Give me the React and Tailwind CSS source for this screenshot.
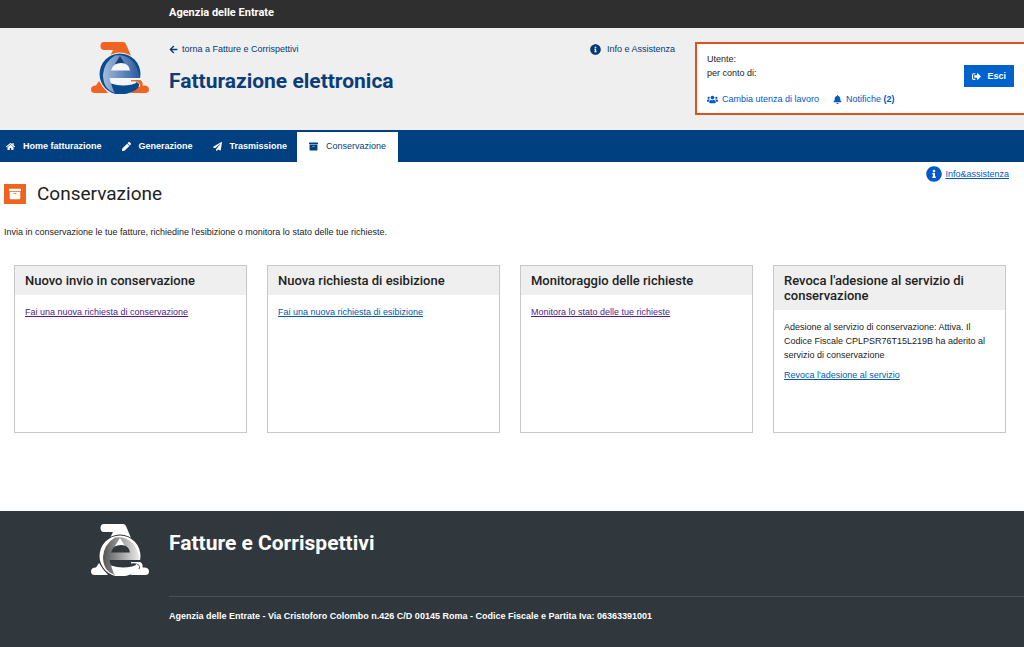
import React from 'react';
import {
  FaArchive,
  FaArrowLeft,
  FaBell,
  FaHome,
  FaInfoCircle,
  FaPaperPlane,
  FaPen,
  FaSignOutAlt,
  FaUsers,
} from 'react-icons/fa';

const NAV_ITEMS = [
  { label: 'Home fatturazione', icon: FaHome },
  { label: 'Generazione', icon: FaPen },
  { label: 'Trasmissione', icon: FaPaperPlane },
  { label: 'Conservazione', icon: FaArchive, active: true },
];

const CARDS = [
  {
    title: 'Nuovo invio in conservazione',
    link: 'Fai una nuova richiesta di conservazione',
    visited: true,
  },
  {
    title: 'Nuova richiesta di esibizione',
    link: 'Fai una nuova richiesta di esibizione',
  },
  {
    title: 'Monitoraggio delle richieste',
    link: 'Monitora lo stato delle tue richieste',
    visited: true,
  },
  {
    title: "Revoca l'adesione al servizio di conservazione",
    text: 'Adesione al servizio di conservazione: Attiva. Il Codice Fiscale CPLPSR76T15L219B ha aderito al servizio di conservazione',
    link: "Revoca l'adesione al servizio",
  },
];

const Logo = ({ id, base, ring, from, to, hole, swoosh, peak }) => (
  <svg viewBox="0 0 58 52" className="h-[52px] w-[58px] shrink-0" role="img" aria-label="Agenzia delle Entrate">
    <defs>
      <linearGradient id={id} x1="0" y1="0" x2="1" y2="0">
        <stop offset="0" stopColor={from} />
        <stop offset="1" stopColor={to} />
      </linearGradient>
    </defs>
    {/* Cap and feet */}
    <path d="M13 0H32Q34 0 35 2L40 14H19L22 8H13Q9.500 8 9.500 4T13 0Z" fill={base} />
    <path d="M8 39 5 43.500H4Q0 44 0 47.500T4 51H17Z" fill={base} />
    <path d="M42 38H49Q52 39 51 43.500H54Q58 44 58 47.500T54 51H40Z" fill={base} />
    {/* Round letter */}
    <circle cx="29" cy="32" r="21.500" fill={hole} />
    <circle cx="29" cy="32" r="20.500" fill={ring} />
    <path d="M24 13.500Q44 11 49 36H19Q19 41 24 45V51Q12 47 12 33 13 20 24 13.500Z" fill={`url(#${id})`} />
    <path d="M29 14 34 22H24Z" fill={peak} />
    <path d="M20 28.500Q22 21 30 21T39 28.500Z" fill={hole} />
    <path d="M18.500 36H51V44L44 46H24Q19 42 18.500 36Z" fill={hole} />
    {/* Closing stroke and right arm */}
    <path d="M20 41.500Q30 45 41 42.500 46 41 45 40 50 41 47 46 42 51.500 31 52 26 52 23 50Z" fill={swoosh} />
    <path d="M40 38H49Q52 39 51.500 43.500L53 51H47Q51 43 47 40 44 39 40 39.500Z" fill={base} />
  </svg>
);

const NavItem = ({ label, icon: Icon, active }) => (
  <a
    href="#"
    aria-current={active ? 'page' : undefined}
    className={
      active
        ? 'mt-0.5 flex items-center gap-2 bg-white px-3 pb-0.5 text-[#004080]'
        : 'flex items-center gap-2 px-2.5 font-bold text-white first:pl-1.5'
    }
  >
    <Icon className="size-[9px]" />
    {label}
  </a>
);

const Card = ({ title, text, link, visited }) => (
  <section className="min-h-[168px] border border-[#c8c8c8] bg-white">
    <h2 className="bg-[#efefef] px-2.5 py-[7px] font-['Roboto',sans-serif] text-[13px] leading-[15px] font-medium text-[#222]">
      {title}
    </h2>
    <div className="flex flex-col gap-1.5 px-2.5 pt-2.5">
      {text && <p>{text}</p>}
      <a href="#" className={visited ? 'text-[#551a8b] underline' : 'text-[#0059b3] underline'}>
        {link}
      </a>
    </div>
  </section>
);

export default function App() {
  return (
    <div className="flex min-h-screen flex-col bg-white font-['Liberation_Sans',Arial,sans-serif] text-[9px] leading-[14px] text-[#222]">
      <div className="bg-[#2f2f2f] pt-[3px] pb-[5px] pl-[169px]">
        <p className="font-['Roboto',sans-serif] text-[11px] leading-[20px] font-bold text-white">Agenzia delle Entrate</p>
      </div>

      <header className="flex items-start bg-[#efefef] pt-3.5 pb-[15px]">
        <div className="flex flex-1 items-start gap-5 pl-[91px]">
          <Logo
            id="logo-header"
            base="#ee6420"
            ring="#0b4c8c"
            from="#a5bbdc"
            to="#27599d"
            hole="#f4f5f8"
            swoosh="#084c8d"
            peak="#123f7c"
          />
          <div>
            <a href="#" className="flex items-center gap-1 text-[#003a75]">
              <FaArrowLeft className="size-[9px]" />
              torna a Fatture e Corrispettivi
            </a>
            <h1 className="mt-[11px] font-['Roboto',sans-serif] text-[21px] leading-[28px] font-bold text-[#0b3d78]">
              Fatturazione elettronica
            </h1>
          </div>
        </div>
        <a href="#" className="mr-5 flex items-center gap-1.5 text-[#003a75]">
          <FaInfoCircle className="size-[11px]" />
          Info e Assistenza
        </a>
        <div className="flex w-[329px] items-start justify-between border-2 border-r-0 border-[#e2501f] bg-white pt-2 pr-2.5 pb-[7px] pl-2.5">
          <div>
            <p>Utente:</p>
            <p>per conto di:</p>
            <div className="mt-3 flex gap-3.5 text-[#0059c8]">
              <a href="#" className="flex items-center gap-1">
                <FaUsers className="size-[11px]" />
                Cambia utenza di lavoro
              </a>
              <a href="#" className="flex items-center gap-1">
                <FaBell className="size-[9px]" />
                <span>
                  Notifiche <b>(2)</b>
                </span>
              </a>
            </div>
          </div>
          <button
            type="button"
            className="mt-[13px] flex h-[22px] items-center gap-1.5 bg-[#0062cc] px-2 font-bold text-white"
          >
            <FaSignOutAlt className="size-[9px]" />
            Esci
          </button>
        </div>
      </header>

      <nav className="flex h-8 bg-[#004080]">
        {NAV_ITEMS.map((item) => (
          <NavItem key={item.label} {...item} />
        ))}
      </nav>

      <main className="flex-1 pb-[77px]">
        <div className="flex items-start justify-between pr-[15px] pl-1">
          <div className="flex items-center gap-[11px] pt-[18px]">
            <span className="flex h-5 w-[22px] items-center justify-center bg-[#ee6420]">
              <FaArchive className="size-3 text-white" />
            </span>
            <h1 className="font-['Roboto',sans-serif] text-[19px] leading-[28px] text-[#222]">Conservazione</h1>
          </div>
          <a href="#" className="flex items-center gap-[3px] pt-1 text-[#0059c8] underline">
            <FaInfoCircle className="size-4" />
            Info&amp;assistenza
          </a>
        </div>
        <p className="mt-[17px] pl-1">
          Invia in conservazione le tue fatture, richiedine l'esibizione o monitora lo stato delle tue richieste.
        </p>
        <div className="mt-[26px] grid grid-cols-4 gap-5 pr-[18px] pl-3.5">
          {CARDS.map((card) => (
            <Card key={card.title} {...card} />
          ))}
        </div>
      </main>

      <footer className="flex items-start gap-5 bg-[#30373d] pt-[13px] pb-6 pl-[91px] text-white">
        <Logo
          id="logo-footer"
          base="#ffffff"
          ring="#ffffff"
          from="#555555"
          to="#eeeeee"
          hole="#30373d"
          swoosh="#ffffff"
          peak="#ffffff"
        />
        <div className="flex-1">
          <h2 className="mt-[5px] font-['Roboto',sans-serif] text-[21px] leading-[28px] font-bold">Fatture e Corrispettivi</h2>
          <p className="mt-[39px] border-t border-[#48525c] pt-3 font-bold">
            Agenzia delle Entrate - Via Cristoforo Colombo n.426 C/D 00145 Roma - Codice Fiscale e Partita Iva: 06363391001
          </p>
        </div>
      </footer>
    </div>
  );
}
